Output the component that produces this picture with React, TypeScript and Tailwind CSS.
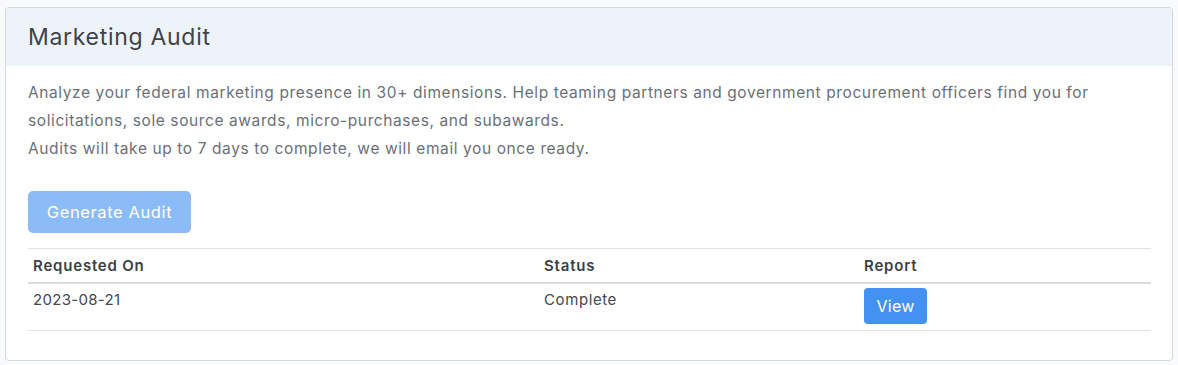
import React from 'react';

export default function App() {
  const rows = [{ requested: '2023-08-21', status: 'Complete' }];

  return (
    <div className="min-h-screen bg-[#f9fafc] pt-[7px] px-[5px] font-['Inter',sans-serif]">
      <div className="w-[1168px] rounded-[4px] border border-[#d6d8db] bg-white overflow-hidden">
        {/* Header */}
        <div className="h-[58px] bg-[#eef3fa] px-[22px] flex items-center">
          <h1 className="text-[23px] text-[#3f4248] tracking-[0.7px] pt-[1px]">Marketing Audit</h1>
        </div>

        {/* Body */}
        <div className="px-[22px] pt-[13px] pb-[29px]">
          <p className="text-[15.5px] leading-[28px] text-[#6b6f77] tracking-[0.6px]">
            Analyze your federal marketing presence in 30+ dimensions. Help teaming partners and government procurement officers find you for
            <br />
            solicitations, sole source awards, micro-purchases, and subawards.
            <br />
            Audits will take up to 7 days to complete, we will email you once ready.
          </p>

          <button
            disabled
            className="mt-[28px] h-[42px] w-[163px] rounded-[5px] bg-[#8bbcf7] text-white text-[16.5px] tracking-[0.6px]"
          >
            Generate Audit
          </button>

          <table className="mt-[15px] w-[1123px] border-t border-[#dee2e6] text-[15px]">
            <thead>
              <tr className="border-b-2 border-[#dcdcdc]">
                <th className="w-[511px] text-left font-semibold text-[#3c3f45] px-[5px] pt-[6px] pb-[4px] tracking-[0.8px]">Requested On</th>
                <th className="w-[320px] text-left font-semibold text-[#3c3f45] px-[5px] pt-[6px] pb-[4px] tracking-[0.8px]">Status</th>
                <th className="text-left font-semibold text-[#3c3f45] px-[5px] pt-[6px] pb-[4px] tracking-[0.8px]">Report</th>
              </tr>
            </thead>
            <tbody>
              {rows.map((r, i) => (
                <tr key={i} className="border-b border-[#dde4ec]">
                  <td className="align-top px-[5px] pt-[5px] text-[#44474d] tracking-[0.3px]">{r.requested}</td>
                  <td className="align-top px-[5px] pt-[5px] text-[#44474d] tracking-[0.6px]">{r.status}</td>
                  <td className="align-top px-[5px] pt-[4px] pb-[6px]">
                    <button className="h-[36px] w-[63px] rounded-[4px] bg-[#4392f1] text-white text-[16px] tracking-[0.3px]">View</button>
                  </td>
                </tr>
              ))}
            </tbody>
          </table>
        </div>
      </div>
    </div>
  );
}
